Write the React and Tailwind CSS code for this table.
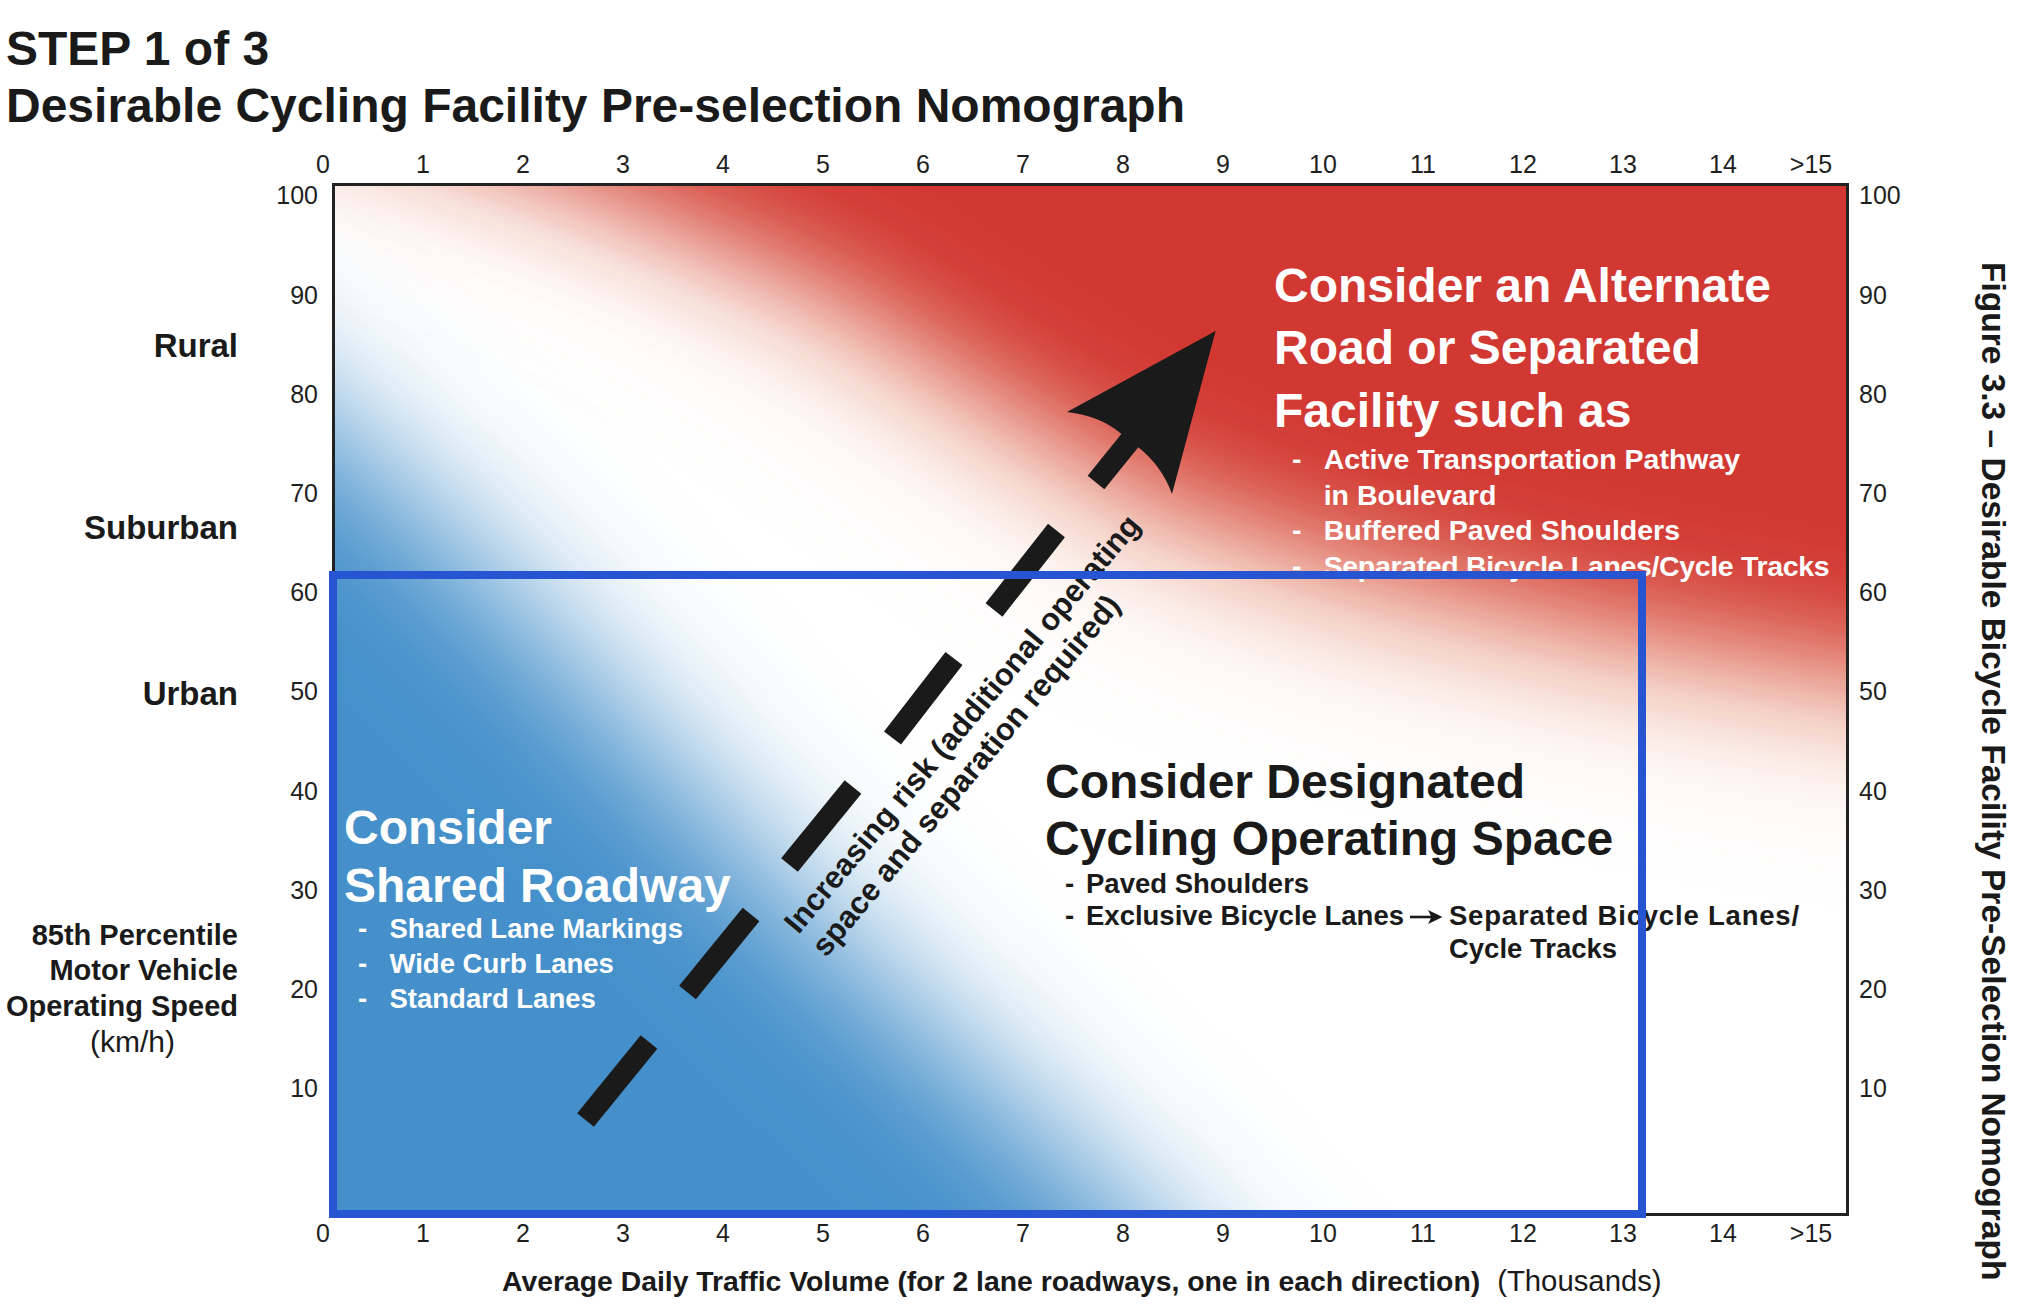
import React from "react";

const DASHES = [
  [585.5, 1120, 649, 1042],
  [687.5, 992.5, 751, 914.5],
  [789.5, 865, 853, 787],
  [892.5, 738, 954, 658.5],
  [994, 610, 1056.5, 530.5],
  [1096, 482.5, 1140, 428],
];

const LEFT_TICKS = [100, 90, 80, 70, 60, 50, 40, 30, 20, 10];
const X_TICKS = [0, 1, 2, 3, 4, 5, 6, 7, 8, 9, 10, 11, 12, 13, 14];

const RED_EDGE =
  "M-500,-230 L590,187 L830,290 L1000,400 L1150,490 L1350,560 L1600,620 L1847,665 L2400,740 L2400,-700 L-500,-700 Z";
const SALMON_EDGE =
  "M-500,-150 L620,200 L830,320 L1000,440 L1150,540 L1350,610 L1600,670 L1847,715 L2400,790 L2400,-700 L-500,-700 Z";
const BLUE_EDGE =
  "M-500,-260 L335,425 L500,580 L660,752 L800,900 L1000,1090 L1130,1213 L1500,1600 L-500,1600 Z";

function XTicks() {
  return (
    <div className="flex -ml-[59px] h-[25px] text-[25px] leading-[25px] text-[#1f1f1f]">
      {X_TICKS.map((t) => (
        <div key={t} className="w-[100px] shrink-0 text-center">
          {t}
        </div>
      ))}
      <div className="w-[76px] shrink-0 text-center">&gt;15</div>
    </div>
  );
}

function YTicks({ align }) {
  return (
    <div className={"flex flex-col -mt-[36.6px] text-[25px] text-[#1f1f1f] " + (align === "right" ? "text-right" : "text-left")}>
      {LEFT_TICKS.map((t) => (
        <div key={t} className="h-[99.2px] leading-[99.2px]">
          {t}
        </div>
      ))}
    </div>
  );
}

function PlotDrawing() {
  return (
    <svg className="block w-full h-full" viewBox="335 186 1511 1027" preserveAspectRatio="none">
      <defs>
        <filter id="blurRed" filterUnits="userSpaceOnUse" x="-800" y="-900" width="3600" height="2800">
          <feGaussianBlur stdDeviation="55" />
        </filter>
        <filter id="blurSalmon" filterUnits="userSpaceOnUse" x="-800" y="-900" width="3600" height="2800">
          <feGaussianBlur stdDeviation="80" />
        </filter>
        <filter id="blurBlue" filterUnits="userSpaceOnUse" x="-800" y="-900" width="3600" height="2800">
          <feGaussianBlur stdDeviation="75" />
        </filter>
      </defs>
      <rect x="0" y="0" width="2100" height="1400" fill="#ffffff" />
      <path d={SALMON_EDGE} fill="#eeb39b" filter="url(#blurSalmon)" />
      <path d={RED_EDGE} fill="#d23732" transform="translate(8,-12)" filter="url(#blurRed)" />
      <path d={BLUE_EDGE} fill="#4490ca" filter="url(#blurBlue)" />
      {DASHES.map((d, i) => (
        <line key={i} x1={d[0]} y1={d[1]} x2={d[2]} y2={d[3]} stroke="#1a1a1a" strokeWidth="21.5" strokeLinecap="butt" />
      ))}
      <path d="M1215.6,331 L1067,412 Q1100,416 1119.6,432.6 L1138,447 Q1162,466 1172,494 Z" fill="#1a1a1a" />
    </svg>
  );
}

export default function App() {
  return (
    <div className="relative w-[2036px] h-[1314px] overflow-hidden bg-white text-[#1a1a1a] font-['Liberation_Sans',Arial,sans-serif]">
      {/* Titles */}
      <div className="pt-[20px] pl-[6px] text-[48px] leading-[57px] font-bold whitespace-nowrap">
        <div>STEP 1 of 3</div>
        <div>Desirable Cycling Facility Pre-selection Nomograph</div>
      </div>

      {/* Chart section */}
      <div className="mt-[17.8px] flex">
        {/* Left gutter */}
        <div className="w-[332px] shrink-0 pt-[31.2px] flex">
          <div className="w-[238px] shrink-0 flex flex-col items-end font-bold text-right">
            <div className="mt-[146.3px] text-[33px] leading-[33px]">Rural</div>
            <div className="mt-[148.6px] text-[33px] leading-[33px]">Suburban</div>
            <div className="mt-[133px] text-[33px] leading-[33px]">Urban</div>
            <div className="mt-[207.7px] text-[29px] leading-[35.5px] whitespace-nowrap">
              <div>85th Percentile</div>
              <div>Motor Vehicle</div>
              <div>Operating Speed</div>
            </div>
            <div className="w-full pl-[27px] text-center font-normal text-[30px] leading-[35.5px]">(km/h)</div>
          </div>
          <div className="ml-auto mr-[14px] w-[60px]">
            <YTicks align="right" />
          </div>
        </div>

        {/* Center column */}
        <div className="w-[1517px] shrink-0">
          <XTicks />
          <div className="relative mt-[6.2px] w-[1517px] h-[1033px] border-[3px] border-[#222222]">
            <PlotDrawing />

            {/* Red zone text */}
            <div className="absolute left-[939px] top-[69.2px] text-white font-bold whitespace-nowrap">
              <div className="text-[48px] leading-[62.2px]">
                Consider an Alternate
                <br />
                Road or Separated
                <br />
                Facility such as
              </div>
              <ul className="mt-[0.5px] text-[28.5px] leading-[35.4px]">
                <li className="flex pl-[18px]">
                  <span className="w-[31.7px] shrink-0">-</span>
                  <span>
                    Active Transportation Pathway
                    <br />
                    in Boulevard
                  </span>
                </li>
                <li className="flex pl-[18px]">
                  <span className="w-[31.7px] shrink-0">-</span>
                  <span>Buffered Paved Shoulders</span>
                </li>
                <li className="flex pl-[18px]">
                  <span className="w-[31.7px] shrink-0">-</span>
                  <span className="tracking-[-0.35px]">Separated Bicycle Lanes/Cycle Tracks</span>
                </li>
              </ul>
            </div>

            {/* Blue zone text */}
            <div className="absolute left-[9px] top-[613.3px] text-white font-bold whitespace-nowrap">
              <div className="text-[48px] leading-[57.5px]">
                Consider
                <br />
                Shared Roadway
              </div>
              <ul className="-mt-[3.5px] text-[27.5px] leading-[35.2px]">
                <li className="flex pl-[14px]">
                  <span className="w-[31.5px] shrink-0">-</span>
                  <span>Shared Lane Markings</span>
                </li>
                <li className="flex pl-[14px]">
                  <span className="w-[31.5px] shrink-0">-</span>
                  <span>Wide Curb Lanes</span>
                </li>
                <li className="flex pl-[14px]">
                  <span className="w-[31.5px] shrink-0">-</span>
                  <span>Standard Lanes</span>
                </li>
              </ul>
            </div>

            {/* White zone text */}
            <div className="absolute left-[710px] top-[566.8px] text-[#1a1a1a] font-bold whitespace-nowrap">
              <div className="text-[48px] leading-[57.5px]">
                Consider Designated
                <br />
                Cycling Operating Space
              </div>
              <ul className="text-[27.5px] leading-[32.5px]">
                <li className="flex pl-[20px]">
                  <span className="w-[21px] shrink-0">-</span>
                  <span>Paved Shoulders</span>
                </li>
                <li className="flex pl-[20px]">
                  <span className="w-[21px] shrink-0">-</span>
                  <span>Exclusive Bicycle Lanes</span>
                  <svg className="ml-[5px] mt-[6.75px] w-[34px] h-[20px] shrink-0" viewBox="0 0 34 20">
                    <line x1="1" y1="10" x2="23" y2="10" stroke="#1a1a1a" strokeWidth="2.6" />
                    <polygon points="19,3 33.5,10 19,17 22.5,10" fill="#1a1a1a" />
                  </svg>
                  <div className="ml-[6px]">
                    <div className="tracking-[0.8px]">Separated Bicycle Lanes/</div>
                    <div>Cycle Tracks</div>
                  </div>
                </li>
              </ul>
            </div>

            {/* Rotated risk label */}
            <div className="absolute left-[441.7px] top-[731px] origin-top-left rotate-[-50deg] text-[31px] leading-[36px] font-bold whitespace-nowrap text-[#1a1a1a]">
              Increasing risk (additional operating
              <br />
              space and separation required)
            </div>

            {/* Blue outline box */}
            <div className="absolute -left-[6px] top-[385px] w-[1317px] h-[647px] border-[8px] border-[#2755d2]" />
          </div>
          <div className="mt-[4.8px]">
            <XTicks />
          </div>
          <div className="mt-[20.5px] pl-[170px] text-[28px] leading-[30px] whitespace-nowrap">
            <span className="font-bold text-[28.35px]">Average Daily Traffic Volume (for 2 lane roadways, one in each direction)</span>
            <span className="ml-[17px] text-[29.3px]">(Thousands)</span>
          </div>
        </div>

        {/* Right tick column */}
        <div className="w-[124px] shrink-0 pt-[31.2px] pl-[10px]">
          <YTicks align="left" />
        </div>

        {/* Caption */}
        <div className="w-[63px] shrink-0 pt-[109.9px] pl-[3.3px]">
          <div className="[writing-mode:vertical-rl] text-[33.5px] leading-[34px] font-bold whitespace-nowrap">
            Figure 3.3 – Desirable Bicycle Facility Pre-Selection Nomograph
          </div>
        </div>
      </div>
    </div>
  );
}
